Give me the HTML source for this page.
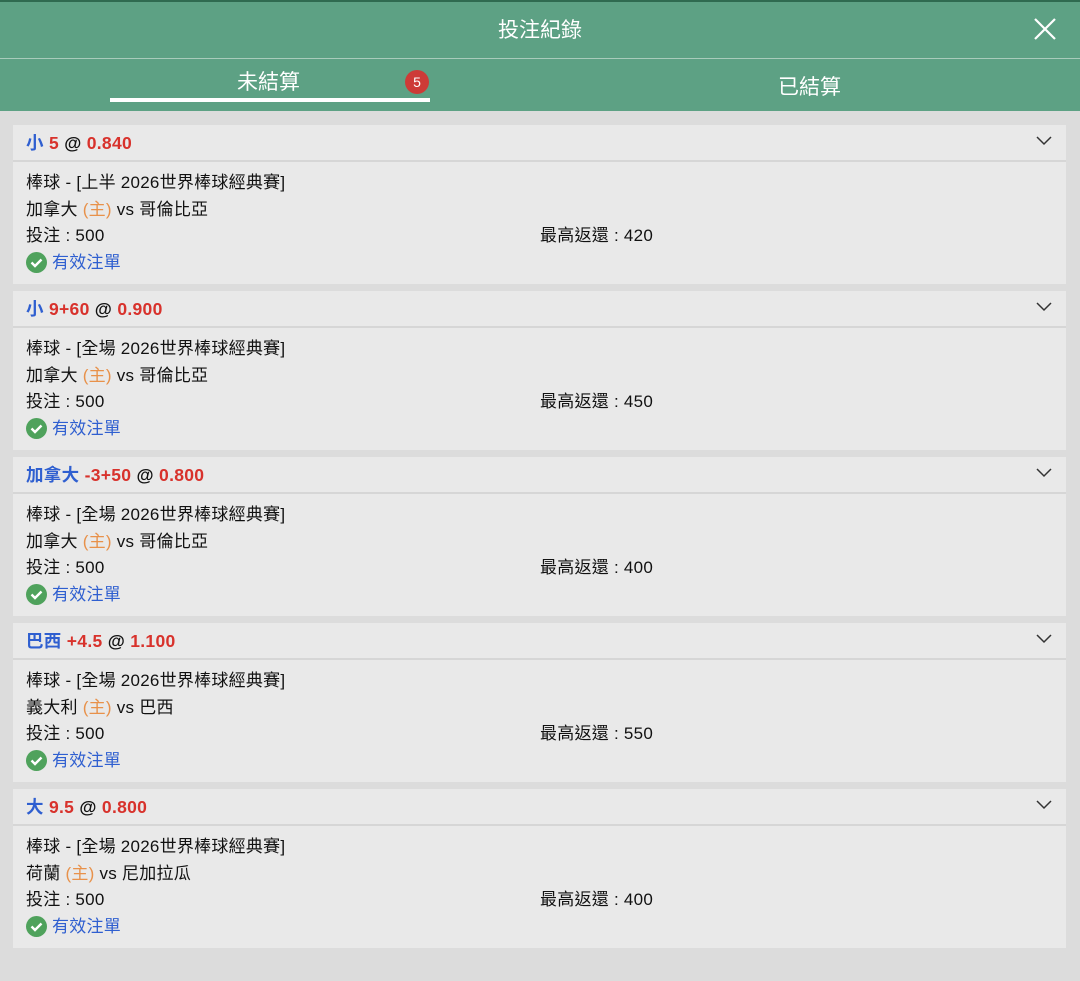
<!DOCTYPE html>
<html><head><meta charset="utf-8"><style>
*{margin:0;padding:0;box-sizing:border-box}
body{width:1080px;height:981px;background:#dcdcdc;font-family:"Liberation Sans","Noto Sans CJK TC",sans-serif;position:relative;overflow:hidden;color:#111}
.top{position:absolute;left:0;top:0;width:1080px;height:111px;background:#5da184;border-top:2px solid #2f6a50}
.title{position:absolute;top:12px;width:1080px;text-align:center;color:#fff;font-size:21px}
.line{position:absolute;top:56px;left:0;width:1080px;height:1px;background:#a9cbbb}
.tab{position:absolute;top:64px;color:#fff;font-size:21px}
.ul{position:absolute;left:110px;top:96px;width:320px;height:4px;background:#fff}
.badge{position:absolute;left:405px;top:68px;width:24px;height:24px;border-radius:50%;background:#cd3b37;color:#fff;font-size:14px;text-align:center;line-height:24px}
.card{position:absolute;left:13px;width:1053px;height:159px;background:#e9e9e9}
.hd{height:37px;border-bottom:2px solid #d6d6d6;padding-left:13px;line-height:37px;font-size:17.5px;font-weight:bold;position:relative;letter-spacing:0.3px}
.b{color:#2f5fd0}.r{color:#d8322c}
.chev{position:absolute;right:14px;top:11px}
.bd{padding-left:13px;font-size:17px;position:relative;letter-spacing:0.25px}
.row{height:26.5px;line-height:26px}
.row:first-child{margin-top:8px}
.o{color:#e8914a}
.max{position:absolute;left:527px;top:53px;line-height:26px}
.ok{color:#2f5fd0;display:flex;align-items:center}
.ok svg{margin-right:5px}
</style></head><body>
<div class="top">
<div class="title">投注紀錄</div>
<svg style="position:absolute;left:1034px;top:16px" width="22" height="22" viewBox="0 0 22 22"><path d="M1 1L21 21M21 1L1 21" stroke="#fff" stroke-width="2.2"/></svg>
<div class="line"></div>
<div class="tab" style="left:237px">未結算</div>
<div class="badge">5</div>
<div class="ul"></div>
<div class="tab" style="left:778px;top:69px">已結算</div>
</div>

<div class="card" style="top:125px"><div class="hd"><span class="b">小</span> <span class="r">5</span> @ <span class="r">0.840</span><svg class="chev" width="16" height="10" viewBox="0 0 16 10"><path d="M1 1L8 8L15 1" fill="none" stroke="#333" stroke-width="1.5"/></svg></div>
<div class="bd"><div class="row">棒球 - [上半 2026世界棒球經典賽]</div><div class="row">加拿大 <span class="o">(主)</span> vs 哥倫比亞</div><div class="row">投注 : 500</div><div class="row ok"><svg width="21" height="21" viewBox="0 0 21 21"><circle cx="10.5" cy="10.5" r="10.5" fill="#4fa25c"/><path d="M5.5 10.5L9 14L15.5 7.5" fill="none" stroke="#fff" stroke-width="2.4"/></svg>有效注單</div><div class="max">最高返還 : 420</div></div></div>

<div class="card" style="top:291px"><div class="hd"><span class="b">小</span> <span class="r">9+60</span> @ <span class="r">0.900</span><svg class="chev" width="16" height="10" viewBox="0 0 16 10"><path d="M1 1L8 8L15 1" fill="none" stroke="#333" stroke-width="1.5"/></svg></div>
<div class="bd"><div class="row">棒球 - [全場 2026世界棒球經典賽]</div><div class="row">加拿大 <span class="o">(主)</span> vs 哥倫比亞</div><div class="row">投注 : 500</div><div class="row ok"><svg width="21" height="21" viewBox="0 0 21 21"><circle cx="10.5" cy="10.5" r="10.5" fill="#4fa25c"/><path d="M5.5 10.5L9 14L15.5 7.5" fill="none" stroke="#fff" stroke-width="2.4"/></svg>有效注單</div><div class="max">最高返還 : 450</div></div></div>

<div class="card" style="top:457px"><div class="hd"><span class="b">加拿大</span> <span class="r">-3+50</span> @ <span class="r">0.800</span><svg class="chev" width="16" height="10" viewBox="0 0 16 10"><path d="M1 1L8 8L15 1" fill="none" stroke="#333" stroke-width="1.5"/></svg></div>
<div class="bd"><div class="row">棒球 - [全場 2026世界棒球經典賽]</div><div class="row">加拿大 <span class="o">(主)</span> vs 哥倫比亞</div><div class="row">投注 : 500</div><div class="row ok"><svg width="21" height="21" viewBox="0 0 21 21"><circle cx="10.5" cy="10.5" r="10.5" fill="#4fa25c"/><path d="M5.5 10.5L9 14L15.5 7.5" fill="none" stroke="#fff" stroke-width="2.4"/></svg>有效注單</div><div class="max">最高返還 : 400</div></div></div>

<div class="card" style="top:623px"><div class="hd"><span class="b">巴西</span> <span class="r">+4.5</span> @ <span class="r">1.100</span><svg class="chev" width="16" height="10" viewBox="0 0 16 10"><path d="M1 1L8 8L15 1" fill="none" stroke="#333" stroke-width="1.5"/></svg></div>
<div class="bd"><div class="row">棒球 - [全場 2026世界棒球經典賽]</div><div class="row">義大利 <span class="o">(主)</span> vs 巴西</div><div class="row">投注 : 500</div><div class="row ok"><svg width="21" height="21" viewBox="0 0 21 21"><circle cx="10.5" cy="10.5" r="10.5" fill="#4fa25c"/><path d="M5.5 10.5L9 14L15.5 7.5" fill="none" stroke="#fff" stroke-width="2.4"/></svg>有效注單</div><div class="max">最高返還 : 550</div></div></div>

<div class="card" style="top:789px"><div class="hd"><span class="b">大</span> <span class="r">9.5</span> @ <span class="r">0.800</span><svg class="chev" width="16" height="10" viewBox="0 0 16 10"><path d="M1 1L8 8L15 1" fill="none" stroke="#333" stroke-width="1.5"/></svg></div>
<div class="bd"><div class="row">棒球 - [全場 2026世界棒球經典賽]</div><div class="row">荷蘭 <span class="o">(主)</span> vs 尼加拉瓜</div><div class="row">投注 : 500</div><div class="row ok"><svg width="21" height="21" viewBox="0 0 21 21"><circle cx="10.5" cy="10.5" r="10.5" fill="#4fa25c"/><path d="M5.5 10.5L9 14L15.5 7.5" fill="none" stroke="#fff" stroke-width="2.4"/></svg>有效注單</div><div class="max">最高返還 : 400</div></div></div>
</body></html>
